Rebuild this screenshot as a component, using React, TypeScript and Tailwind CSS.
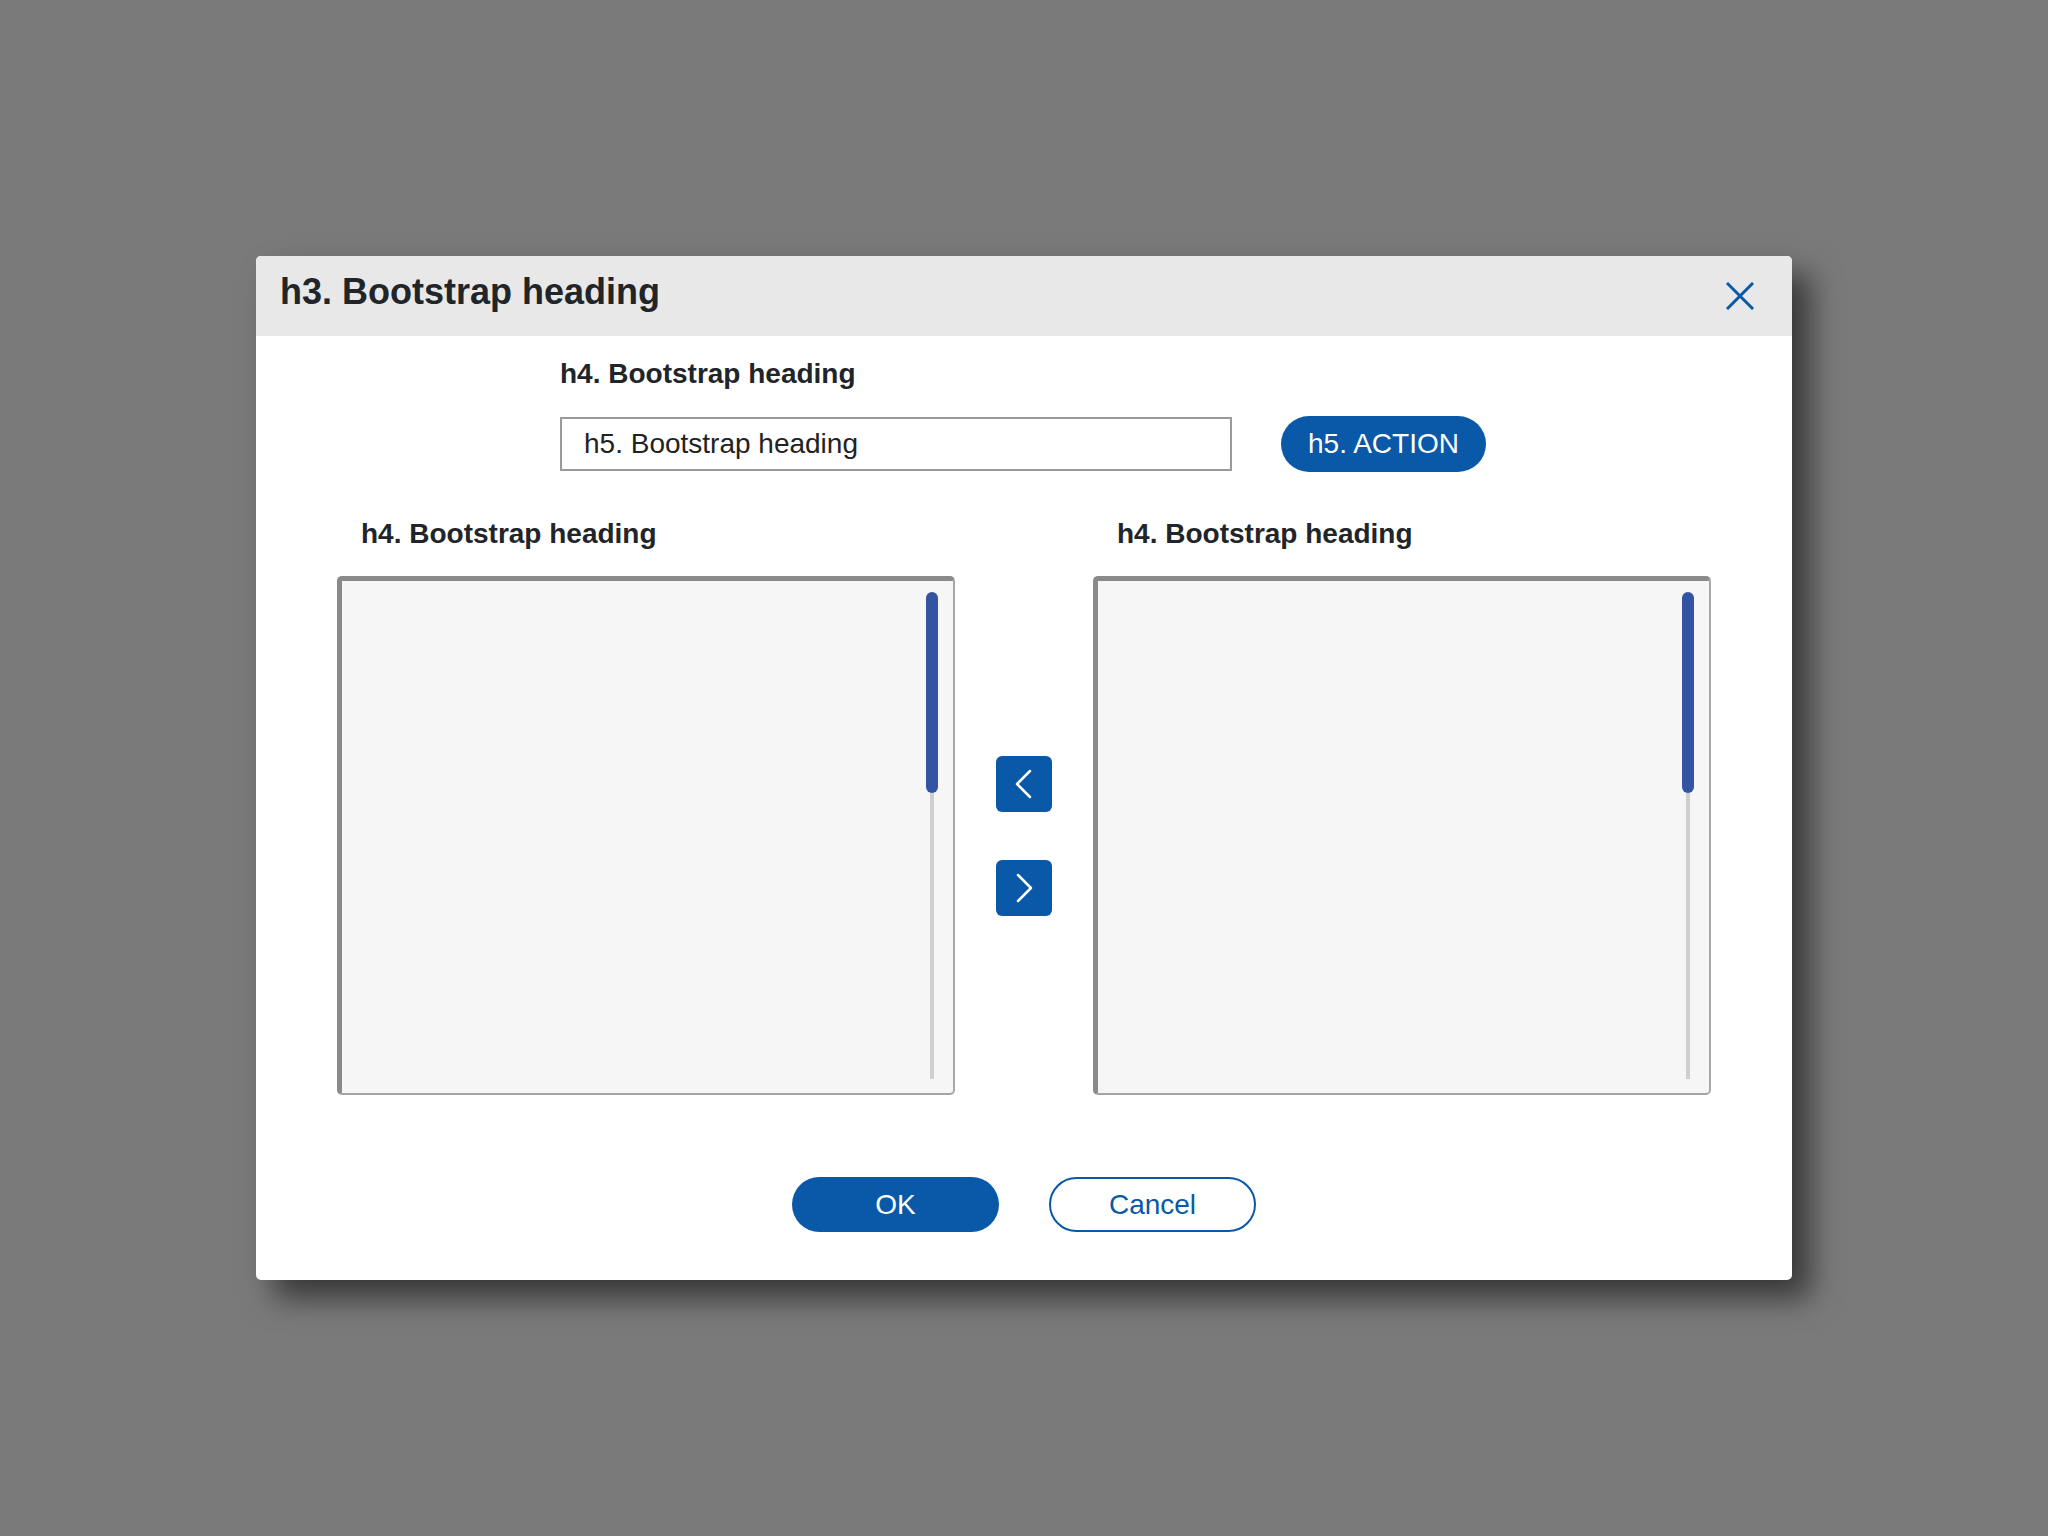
const font = { fontFamily: '"Liberation Sans", Arial, Helvetica, sans-serif' }

function ListBox() {
  return (
    <div className="h-[519px] w-[618px] rounded-[5px] border-t-[5px] border-l-[5px] border-r-2 border-b-2 border-t-[#8a8a8a] border-l-[#8a8a8a] border-r-[#a8a8a8] border-b-[#a4a4a4] bg-[#f6f6f6] flex justify-end pt-[11px] pb-[14px] pr-[15px]">
      <div className="flex w-[12px] flex-col items-center">
        <div className="h-[201px] w-[12px] rounded-full bg-[#3254a2]" />
        <div className="w-[4px] flex-1 bg-[#cfcfcf]" />
      </div>
    </div>
  )
}

function ArrowButton({ dir }: { dir: "left" | "right" }) {
  return (
    <button className="flex h-[56px] w-[56px] items-center justify-center rounded-[6px] bg-[#0a58a8]">
      <svg width="56" height="56" viewBox="0 0 56 56" fill="none">
        <polyline
          points={dir === "left" ? "34,15 21,28 34,41" : "22,15 35,28 22,41"}
          stroke="white"
          strokeWidth="2.5"
          strokeLinecap="round"
          strokeLinejoin="round"
        />
      </svg>
    </button>
  )
}

export default function App() {
  return (
    <div className="flex h-screen w-full items-center justify-center bg-[#7a7a7a]" style={font}>
      <div className="w-[1536px] overflow-hidden rounded-[5px] bg-white shadow-[18px_18px_30px_rgba(0,0,0,0.55)]">
        {/* header */}
        <div className="flex h-[80px] items-center justify-between bg-[#e8e8e8] pl-6 pr-[38px]">
          <h3 className="mb-[9px] text-[36px] font-bold leading-none text-[#212529]">h3. Bootstrap heading</h3>
          <button className="h-[28px] w-[28px]">
            <svg width="28" height="28" viewBox="0 0 28 28" fill="none">
              <path d="M2 2 L26 26 M26 2 L2 26" stroke="#0a58a8" strokeWidth="3" strokeLinecap="square" />
            </svg>
          </button>
        </div>

        {/* body */}
        <div className="flex flex-col items-center pt-[24px] pb-[48px]">
          <div className="w-[926px] -translate-x-px">
            <h4 className="text-[28px] font-bold leading-none text-[#212529]">h4. Bootstrap heading</h4>
            <div className="mt-[28px] flex h-[56px] items-center gap-[49px]">
              <div className="flex h-[54px] w-[672px] items-center border-2 border-[#9a9a9a] bg-white pl-[22px] text-[28px] leading-none text-[#222]">
                h5. Bootstrap heading
              </div>
              <button className="h-[56px] w-[205px] rounded-full bg-[#0a58a8] text-[28px] leading-none text-white">
                h5. ACTION
              </button>
            </div>
          </div>

          <div className="mt-[48px] grid grid-cols-[618px_138px_618px] gap-y-[28px]">
            <h4 className="pl-6 text-[28px] font-bold leading-none text-[#212529]">h4. Bootstrap heading</h4>
            <div />
            <h4 className="pl-6 text-[28px] font-bold leading-none text-[#212529]">h4. Bootstrap heading</h4>

            <ListBox />
            <div className="flex flex-col items-center justify-center gap-[48px]">
              <ArrowButton dir="left" />
              <ArrowButton dir="right" />
            </div>
            <ListBox />
          </div>

          <div className="mt-[82px] flex gap-[50px]">
            <button className="h-[55px] w-[207px] rounded-full bg-[#0a58a8] text-[28px] leading-none text-white">OK</button>
            <button className="h-[55px] w-[207px] rounded-full border-2 border-[#0a58a8] bg-white text-[28px] leading-none text-[#0a58a8]">
              Cancel
            </button>
          </div>
        </div>
      </div>
    </div>
  )
}
